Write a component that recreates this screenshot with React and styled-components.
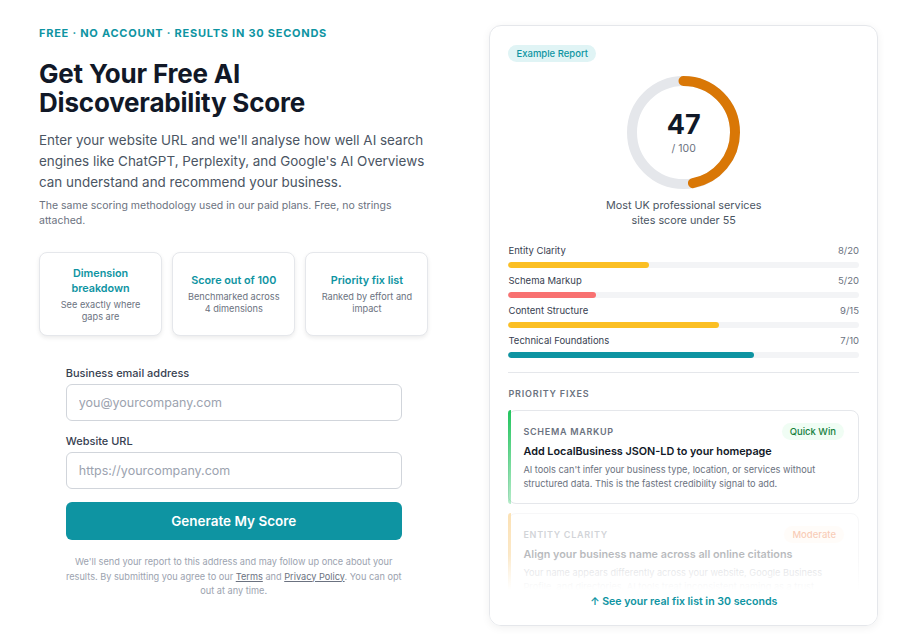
import styled, { createGlobalStyle } from "styled-components";

const GlobalStyle = createGlobalStyle`
  * { box-sizing: border-box; }
  body {
    margin: 0;
    background: #ffffff;
    font-family: Inter, "Noto Sans", sans-serif;
    color: #111827;
  }
`;

const TEAL = "#0e94a2";

const Page = styled.div`
  display: flex;
  align-items: flex-start;
  gap: 61px;
  padding: 25px 23px 18px 39px;
`;

const Left = styled.div`
  width: 390px;
  padding-top: 1px;
`;

const Eyebrow = styled.div`
  font-size: 11px;
  font-weight: 700;
  letter-spacing: 0.75px;
  color: ${TEAL};
  line-height: 14px;
`;

const Heading = styled.h1`
  margin: 19px 0 0;
  font-size: 26px;
  font-weight: 700;
  line-height: 29px;
  letter-spacing: -0.2px;
  color: #111827;
`;

const Lead = styled.p`
  margin: 13px 0 0;
  font-size: 13.45px;
  line-height: 21px;
  color: #4b5563;
`;

const Note = styled.p`
  margin: 5px 0 0;
  font-size: 10.5px;
  line-height: 15px;
  color: #6b7280;
`;

const Features = styled.div`
  display: grid;
  grid-template-columns: repeat(3, 1fr);
  gap: 10px;
  margin-top: 24px;
`;

const Feature = styled.div`
  height: 84px;
  border: 1px solid #e5e7eb;
  border-radius: 8px;
  box-shadow: 0 2px 4px rgba(0, 0, 0, 0.08);
  background: #fff;
  display: flex;
  flex-direction: column;
  align-items: center;
  justify-content: center;
  text-align: center;
  padding: 0 8px;
`;

const FeatureTitle = styled.div`
  max-width: 96px;
  font-size: 10.8px;
  font-weight: 600;
  line-height: 15px;
  color: ${TEAL};
`;

const FeatureText = styled.div`
  max-width: 96px;
  margin-top: 3px;
  font-size: 9.2px;
  line-height: 12px;
  color: #6b7280;
`;

const Form = styled.form`
  width: 336px;
  margin: 30px auto 0;
  display: flex;
  flex-direction: column;
`;

const Label = styled.label`
  font-size: 11px;
  font-weight: 500;
  color: #374151;
  line-height: 14px;
  margin-bottom: 4px;
`;

const Input = styled.input`
  height: 37px;
  border: 1px solid #d1d5db;
  border-radius: 6px;
  padding: 0 12px;
  font-family: inherit;
  font-size: 12.5px;
  color: #111827;
  margin-bottom: ${(p) => p.$gap || 0}px;
  &::placeholder { color: #9ca3af; }
`;

const Submit = styled.button`
  height: 38px;
  border: 0;
  border-radius: 6px;
  background: ${TEAL};
  color: #fff;
  font-family: inherit;
  font-size: 13.5px;
  font-weight: 600;
  margin-top: 13px;
`;

const Disclaimer = styled.p`
  margin: 15px 0 0;
  text-align: center;
  font-size: 9.2px;
  line-height: 14.5px;
  color: #9ca3af;
  a {
    color: #6b7280;
    text-decoration: underline;
  }
`;

const Card = styled.div`
  width: 389px;
  height: 601px;
  border: 1px solid #e5e7eb;
  border-radius: 12px;
  box-shadow: 0 2px 8px rgba(0, 0, 0, 0.06);
  padding: 19px 18px 0;
  display: flex;
  flex-direction: column;
  overflow: hidden;
  position: relative;
`;

const Badge = styled.span`
  align-self: flex-start;
  font-size: 9.5px;
  font-weight: 500;
  line-height: 17px;
  padding: 0 8px;
  border-radius: 999px;
  background: ${(p) => p.$bg};
  color: ${(p) => p.$fg};
`;

const ScoreWrap = styled.div`
  display: flex;
  flex-direction: column;
  align-items: center;
  margin-top: 14px;
`;

const Ring = styled.div`
  position: relative;
  width: 113px;
  height: 113px;
`;

const RingCenter = styled.div`
  position: absolute;
  inset: 0;
  display: flex;
  flex-direction: column;
  align-items: center;
  justify-content: center;
`;

const ScoreNum = styled.div`
  font-size: 27px;
  font-weight: 700;
  line-height: 30px;
  color: #111827;
`;

const ScoreOf = styled.div`
  font-size: 10.5px;
  color: #6b7280;
  line-height: 13px;
  margin-top: 2px;
`;

const Caption = styled.div`
  margin-top: 9px;
  font-size: 10.8px;
  line-height: 15px;
  color: #4b5563;
  text-align: center;
  width: 170px;
`;

const Bars = styled.div`
  margin-top: 17px;
  display: flex;
  flex-direction: column;
  gap: 7px;
`;

const BarRow = styled.div`
  display: flex;
  flex-direction: column;
  gap: 5px;
`;

const BarHead = styled.div`
  display: flex;
  justify-content: space-between;
  font-size: 9.5px;
  line-height: 12px;
  color: #374151;
  span:last-child { color: #6b7280; }
`;

const Track = styled.div`
  height: 6px;
  border-radius: 3px;
  background: #f3f4f6;
  overflow: hidden;
`;

const Fill = styled.div`
  height: 100%;
  border-radius: 3px;
  background: ${(p) => p.$color};
`;

const Divider = styled.hr`
  border: 0;
  border-top: 1px solid #e5e7eb;
  margin: 14px 0 0;
`;

const SectionLabel = styled.div`
  margin-top: 15px;
  font-size: 9px;
  font-weight: 600;
  letter-spacing: 0.8px;
  color: #6b7280;
  line-height: 12px;
`;

const Fixes = styled.div`
  margin-top: 10px;
  display: flex;
  flex-direction: column;
  gap: 9px;
  flex: 1;
  min-height: 0;
  overflow: hidden;
`;

const Fix = styled.div`
  position: relative;
  border: 1px solid #e5e7eb;
  border-radius: 8px;
  padding: 12px 14px 12px 14px;
  opacity: ${(p) => (p.$faded ? 0.3 : 1)};
  flex-shrink: 0;
  &::before {
    content: "";
    position: absolute;
    left: -1px;
    top: -1px;
    bottom: -1px;
    width: 3px;
    border-radius: 8px 0 0 8px;
    background: linear-gradient(${(p) => p.$accent}, ${(p) => p.$accent}55);
  }
`;

const FixTop = styled.div`
  display: flex;
  justify-content: space-between;
  align-items: center;
`;

const FixCat = styled.div`
  font-size: 9px;
  font-weight: 600;
  letter-spacing: 0.7px;
  color: #6b7280;
`;

const FixTitle = styled.div`
  margin-top: 5px;
  font-size: 10.8px;
  font-weight: 600;
  color: #111827;
  line-height: 14px;
`;

const FixText = styled.div`
  margin-top: 4px;
  font-size: 9.2px;
  line-height: 14px;
  color: #6b7280;
`;

const FadeOut = styled.div`
  position: absolute;
  left: 0;
  right: 0;
  bottom: 0;
  height: 70px;
  background: linear-gradient(rgba(255, 255, 255, 0), #fff 50%);
  display: flex;
  align-items: flex-end;
  justify-content: center;
  padding-bottom: 17px;
  font-size: 10.6px;
  font-weight: 600;
  color: ${TEAL};
`;

const bars = [
  { name: "Entity Clarity", score: 8, max: 20, color: "#fbbf24" },
  { name: "Schema Markup", score: 5, max: 20, color: "#f87171" },
  { name: "Content Structure", score: 9, max: 15, color: "#fbbf24" },
  { name: "Technical Foundations", score: 7, max: 10, color: TEAL },
];

const ScoreRing = ({ value }) => {
  const r = 51.5;
  const c = 2 * Math.PI * r;
  return (
    <Ring>
      <svg width="113" height="113" viewBox="0 0 113 113">
        <circle cx="56.5" cy="56.5" r={r} fill="none" stroke="#e5e7eb" strokeWidth="10" />
        <circle
          cx="56.5"
          cy="56.5"
          r={r}
          fill="none"
          stroke="#d97706"
          strokeWidth="10"
          strokeLinecap="round"
          strokeDasharray={`${(c * value) / 100} ${c}`}
          transform="rotate(-90 56.5 56.5)"
        />
      </svg>
      <RingCenter>
        <ScoreNum>{value}</ScoreNum>
        <ScoreOf>/ 100</ScoreOf>
      </RingCenter>
    </Ring>
  );
};

export default function App() {
  return (
    <Page>
      <GlobalStyle />
      <Left>
        <Eyebrow>FREE · NO ACCOUNT · RESULTS IN 30 SECONDS</Eyebrow>
        <Heading>
          Get Your Free AI
          <br />
          Discoverability Score
        </Heading>
        <Lead>
          Enter your website URL and we'll analyse how well AI search engines like ChatGPT,
          Perplexity, and Google's AI Overviews can understand and recommend your business.
        </Lead>
        <Note>The same scoring methodology used in our paid plans. Free, no strings attached.</Note>

        <Features>
          <Feature>
            <FeatureTitle>Dimension breakdown</FeatureTitle>
            <FeatureText>See exactly where gaps are</FeatureText>
          </Feature>
          <Feature>
            <FeatureTitle>Score out of 100</FeatureTitle>
            <FeatureText>Benchmarked across 4 dimensions</FeatureText>
          </Feature>
          <Feature>
            <FeatureTitle>Priority fix list</FeatureTitle>
            <FeatureText>Ranked by effort and impact</FeatureText>
          </Feature>
        </Features>

        <Form onSubmit={(e) => e.preventDefault()}>
          <Label>Business email address</Label>
          <Input type="email" placeholder="you@yourcompany.com" $gap={13} />
          <Label>Website URL</Label>
          <Input type="url" placeholder="https://yourcompany.com" />
          <Submit type="submit">Generate My Score</Submit>
          <Disclaimer>
            We'll send your report to this address and may follow up once about your results. By
            submitting you agree to our <a href="#">Terms</a> and <a href="#">Privacy Policy</a>. You
            can opt out at any time.
          </Disclaimer>
        </Form>
      </Left>

      <Card>
        <Badge $bg="#e0f4f5" $fg={TEAL}>Example Report</Badge>
        <ScoreWrap>
          <ScoreRing value={47} />
          <Caption>Most UK professional services sites score under 55</Caption>
        </ScoreWrap>

        <Bars>
          {bars.map((b) => (
            <BarRow key={b.name}>
              <BarHead>
                <span>{b.name}</span>
                <span>
                  {b.score}/{b.max}
                </span>
              </BarHead>
              <Track>
                <Fill $color={b.color} style={{ width: `${(b.score / b.max) * 100}%` }} />
              </Track>
            </BarRow>
          ))}
        </Bars>

        <Divider />
        <SectionLabel>PRIORITY FIXES</SectionLabel>

        <Fixes>
          <Fix $accent="#22c55e">
            <FixTop>
              <FixCat>SCHEMA MARKUP</FixCat>
              <Badge $bg="#f0fdf4" $fg="#15803d">Quick Win</Badge>
            </FixTop>
            <FixTitle>Add LocalBusiness JSON-LD to your homepage</FixTitle>
            <FixText>
              AI tools can't infer your business type, location, or services without structured
              data. This is the fastest credibility signal to add.
            </FixText>
          </Fix>
          <Fix $accent="#f59e0b" $faded>
            <FixTop>
              <FixCat>ENTITY CLARITY</FixCat>
              <Badge $bg="#fff7ed" $fg="#ea580c">Moderate</Badge>
            </FixTop>
            <FixTitle>Align your business name across all online citations</FixTitle>
            <FixText>
              Your name appears differently across your website, Google Business Profile, and
              directories. AI tools treat inconsistent naming as a trust failure.
            </FixText>
          </Fix>
        </Fixes>

        <FadeOut>↑ See your real fix list in 30 seconds</FadeOut>
      </Card>
    </Page>
  );
}
